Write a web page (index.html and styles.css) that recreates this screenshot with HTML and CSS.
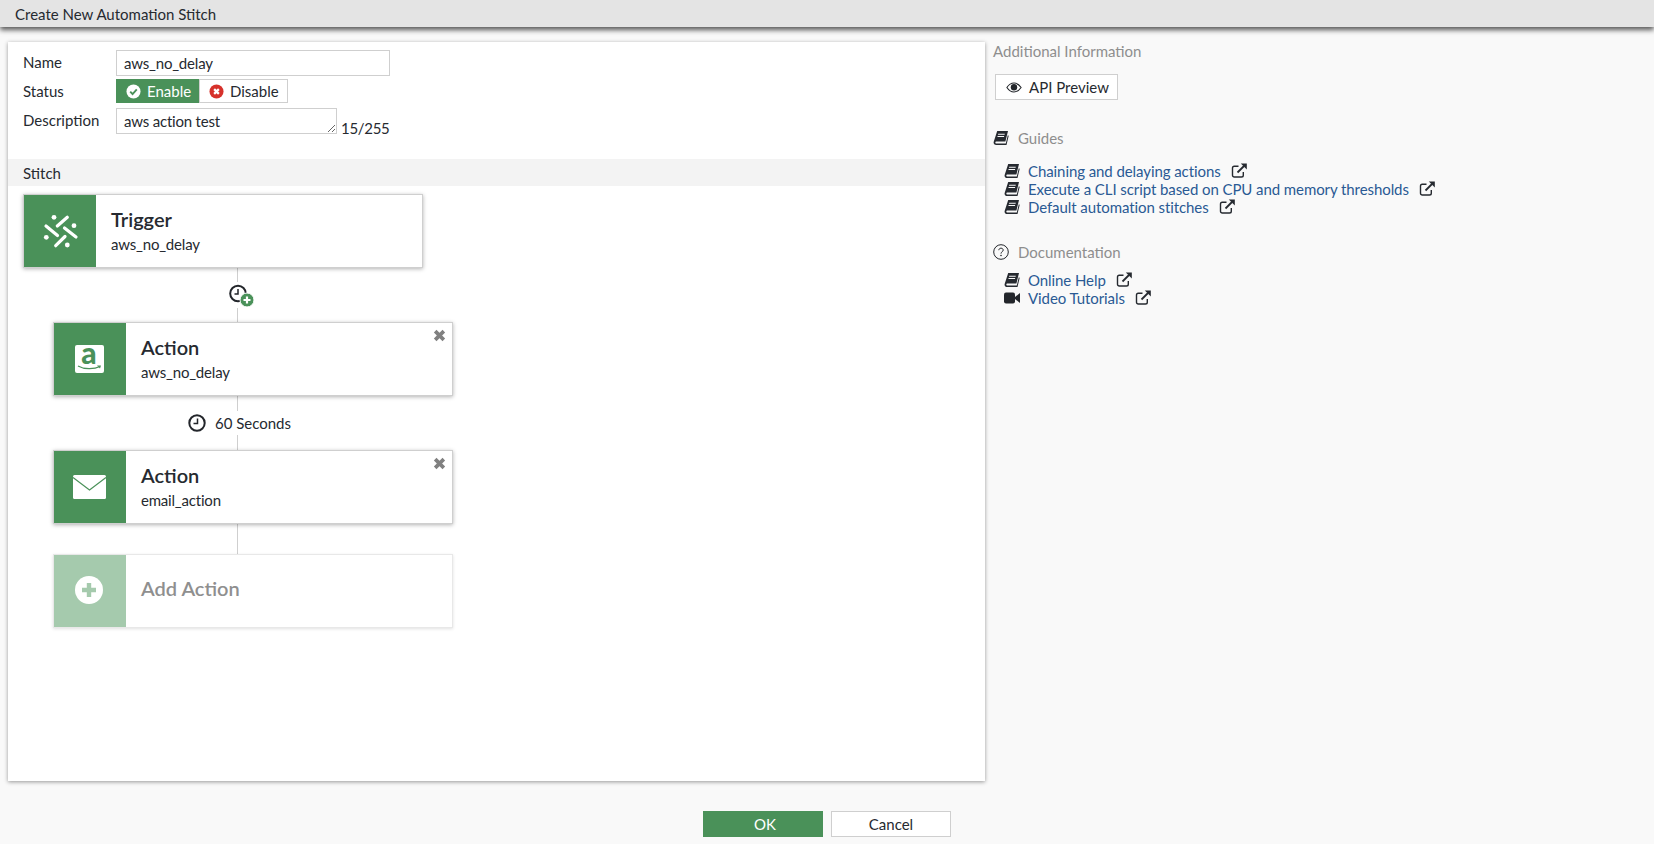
FILE: index.html
```html
<!DOCTYPE html>
<html lang="en">
<head>
    <meta charset="UTF-8">
    <title>Create New Automation Stitch</title>
    <link rel="stylesheet" href="styles.css">
</head>
<body>
    <svg class="defs" width="0" height="0">
        <symbol id="book" viewBox="0 0 16 16">
            <path fill="currentColor" d="M4.200 1H15l-2.600 10.600H3.600c-.9 0-1.300.5-1.300 1s.4 1 1.300 1h9.200l2-8.300.9.500-2.200 9.200H3.300C1.600 15 .4 13.900.6 12.300c0-.3.100-.6.200-.9z"/>
            <path fill="#f9f9f9" d="M5.200 3.800h6.600l-.2 1H5zM4.600 6h6.600l-.2 1H4.400z"/>
        </symbol>
        <symbol id="ext" viewBox="0 0 16 16">
            <path fill="none" stroke="currentColor" stroke-width="1.400" d="M12.300 9v3.200c0 1-.7 1.800-1.800 1.800H3.300c-1 0-1.800-.8-1.800-1.800V5c0-1 .8-1.800 1.800-1.800h4.200"/>
            <path fill="none" stroke="currentColor" stroke-width="1.800" d="M6.500 9.500 13 3"/>
            <path fill="currentColor" d="M9.800.6h6v6z"/>
        </symbol>
        <symbol id="close" viewBox="0 0 12 12">
            <path d="M2 2 10 10M10 2 2 10" fill="none" stroke="currentColor" stroke-width="3.400"/>
        </symbol>
    </svg>

    <header class="top-bar">Create New Automation Stitch</header>

    <main class="content">
        <section class="panel">
            <div class="form">
                <div class="row row-name">
                    <label class="row-label">Name</label>
                    <input class="text-input name-input" type="text" value="aws_no_delay">
                </div>
                <div class="row row-status">
                    <label class="row-label">Status</label>
                    <div class="toggle">
                        <span class="toggle-btn toggle-on">
                            <svg class="toggle-icon" viewBox="0 0 16 16">
                                <circle cx="8" cy="8" r="7.500" fill="#fff"/>
                                <path d="M4.500 8.200 7 10.700 11.500 5.800" fill="none" stroke="#4a9159" stroke-width="2"/>
                            </svg>
                            Enable
                        </span>
                        <span class="toggle-btn toggle-off">
                            <svg class="toggle-icon" viewBox="0 0 16 16">
                                <circle cx="8" cy="8" r="7.500" fill="#d6312b"/>
                                <path d="M5.500 5.500 10.500 10.500M10.500 5.500 5.500 10.500" fill="none" stroke="#fff" stroke-width="2.400"/>
                            </svg>
                            Disable
                        </span>
                    </div>
                </div>
                <div class="row row-desc">
                    <label class="row-label">Description</label>
                    <textarea class="text-input desc-input">aws action test</textarea>
                    <span class="counter">15/255</span>
                </div>
            </div>

            <div class="band">Stitch</div>

            <div class="stitch">
                <div class="card">
                    <div class="card-icon">
                        <svg class="trigger-icon" viewBox="0 0 40 40">
                            <g stroke="#fff" stroke-width="3.200" stroke-linecap="round" fill="none">
                                <path d="M16.300 15 26.300 6.300M5 15 16.500 24.500M23.500 17 35 26M14.700 34.700 24 25.500"/>
                            </g>
                            <g fill="#fff">
                                <circle cx="13" cy="6.300" r="2.400"/>
                                <circle cx="33" cy="14.700" r="2.400"/>
                                <circle cx="5.300" cy="26.300" r="2.400"/>
                                <circle cx="26.300" cy="34" r="2.400"/>
                            </g>
                        </svg>
                    </div>
                    <div class="card-text">
                        <div class="card-title">Trigger</div>
                        <div class="card-sub">aws_no_delay</div>
                    </div>
                </div>

                <div class="link">
                    <span class="link-line"></span>
                    <svg class="add-delay" viewBox="0 0 26 24">
                        <circle cx="10" cy="9.500" r="7.800" fill="#fff" stroke="#23262b" stroke-width="2"/>
                        <path d="M10 5v5H6.500" fill="none" stroke="#23262b" stroke-width="1.500"/>
                        <circle cx="19" cy="16" r="7" fill="#4a9159" stroke="#fff" stroke-width="1"/>
                        <path d="M19 12.500v7M15.500 16h7" stroke="#fff" stroke-width="2.200"/>
                    </svg>
                    <span class="link-line"></span>
                </div>

                <div class="card card-action">
                    <div class="card-icon">
                        <div class="aws-logo">
                            <span class="aws-letter">a</span>
                            <svg class="aws-smile" viewBox="0 0 25 6">
                                <path d="M1 1C7 4.500 17 4.500 23 1.500" fill="none" stroke="#4a9159" stroke-width="1.200"/>
                                <path d="M20 .5h4l-1 3z" fill="#4a9159"/>
                            </svg>
                        </div>
                    </div>
                    <div class="card-text">
                        <div class="card-title">Action</div>
                        <div class="card-sub">aws_no_delay</div>
                    </div>
                    <svg class="card-close"><use href="#close"/></svg>
                </div>

                <div class="link">
                    <span class="link-line"></span>
                    <div class="delay">
                        <svg class="delay-icon" viewBox="0 0 18 18">
                            <circle cx="9" cy="9" r="7.700" fill="none" stroke="#23262b" stroke-width="2"/>
                            <path d="M9.500 4.500V9.500H5.500" fill="none" stroke="#23262b" stroke-width="1.500"/>
                        </svg>
                        60 Seconds
                    </div>
                    <span class="link-line"></span>
                </div>

                <div class="card card-action">
                    <div class="card-icon">
                        <svg class="mail-icon" viewBox="0 0 33 24">
                            <rect width="33" height="24" rx="1.500" fill="#fff"/>
                            <path d="M0 2.500 16.500 15 33 2.500" fill="none" stroke="#4a9159" stroke-width="1.200"/>
                        </svg>
                    </div>
                    <div class="card-text">
                        <div class="card-title">Action</div>
                        <div class="card-sub">email_action</div>
                    </div>
                    <svg class="card-close"><use href="#close"/></svg>
                </div>

                <div class="link link-short">
                    <span class="link-line"></span>
                </div>

                <div class="card card-action card-add">
                    <div class="card-icon">
                        <svg class="plus-icon" viewBox="0 0 28 28">
                            <circle cx="14" cy="14" r="14" fill="#fff"/>
                            <path d="M14 7v14M7 14h14" stroke="#a5caad" stroke-width="4.400"/>
                        </svg>
                    </div>
                    <div class="card-text">
                        <div class="card-title">Add Action</div>
                    </div>
                </div>
            </div>
        </section>

        <aside class="side">
            <div class="side-title">Additional Information</div>
            <button class="preview-btn">
                <svg class="eye-icon" viewBox="0 0 18 12">
                    <path d="M1 6c2-3 5-5 8-5s6 2 8 5c-2 3-5 5-8 5S3 9 1 6z" fill="none" stroke="#23262b" stroke-width="1.200"/>
                    <circle cx="9" cy="5.800" r="3.600" fill="#23262b"/>
                </svg>
                API Preview
            </button>

            <div class="side-head head-guides">
                <svg class="side-icon"><use href="#book"/></svg>
                Guides
            </div>
            <ul class="links">
                <li>
                    <svg class="side-icon"><use href="#book"/></svg>
                    <a class="doc-link">Chaining and delaying actions</a>
                    <svg class="ext-icon"><use href="#ext"/></svg>
                </li>
                <li>
                    <svg class="side-icon"><use href="#book"/></svg>
                    <a class="doc-link">Execute a CLI script based on CPU and memory thresholds</a>
                    <svg class="ext-icon"><use href="#ext"/></svg>
                </li>
                <li>
                    <svg class="side-icon"><use href="#book"/></svg>
                    <a class="doc-link">Default automation stitches</a>
                    <svg class="ext-icon"><use href="#ext"/></svg>
                </li>
            </ul>

            <div class="side-head head-docs">
                <svg class="side-icon" viewBox="0 0 16 16">
                    <circle cx="8" cy="8" r="7.300" fill="none" stroke="#23262b" stroke-width="1"/>
                    <path d="M5.800 6.200C5.900 4.900 6.800 4.200 8 4.200c1.300 0 2.200.8 2.200 1.900 0 1.700-2.200 1.600-2.200 3.500" fill="none" stroke="#23262b" stroke-width="1"/>
                    <circle cx="8" cy="11.500" r=".8" fill="#23262b"/>
                </svg>
                Documentation
            </div>
            <ul class="links links-docs">
                <li>
                    <svg class="side-icon"><use href="#book"/></svg>
                    <a class="doc-link">Online Help</a>
                    <svg class="ext-icon"><use href="#ext"/></svg>
                </li>
                <li>
                    <svg class="side-icon" viewBox="0 0 16 16">
                        <rect y="2.500" width="11" height="11" rx="2" fill="#23262b"/>
                        <path d="M11 7 16 3v10l-5-4z" fill="#23262b"/>
                    </svg>
                    <a class="doc-link">Video Tutorials</a>
                    <svg class="ext-icon"><use href="#ext"/></svg>
                </li>
            </ul>
        </aside>
    </main>

    <footer class="actions">
        <button class="btn btn-ok">OK</button>
        <button class="btn btn-cancel">Cancel</button>
    </footer>
</body>
</html>
```

FILE: styles.css
```css
:root {
    --green: #4a9159;
    --green-light: #a5caad;
    --text: #262a30;
    --muted: #8e8e8e;
    --link: #2a5a94;
    --border: #cfcfcf;
    --page: #f9f9f9;
}

* {
    margin: 0;
    padding: 0;
    box-sizing: border-box;
}

body {
    font-family: Lato, "Liberation Sans", sans-serif;
    font-size: 15px;
    background: var(--page);
    color: var(--text);
    height: 844px;
    overflow: hidden;
}

.defs {
    display: block;
    height: 0;
}

.top-bar {
    height: 27px;
    line-height: 29px;
    padding-left: 15px;
    background: #e4e4e4;
    box-shadow: 0 3px 5px rgba(0, 0, 0, 0.65);
    position: relative;
}

.content {
    display: flex;
    padding: 15px 0 0 8px;
}

.panel {
    width: 977px;
    height: 739px;
    background: #fff;
    box-shadow: 0 1px 4px rgba(0, 0, 0, 0.4);
}

.form {
    padding: 8px 0 0 15px;
}

.row {
    display: flex;
}

.row-label {
    width: 93px;
}

.row-name {
    height: 26px;
    margin-bottom: 3px;
}

.row-name .row-label {
    line-height: 24px;
}

.row-status {
    height: 24px;
    margin-bottom: 5px;
    line-height: 25px;
}

.row-desc {
    height: 26px;
}

.row-desc .row-label {
    line-height: 24px;
}

.text-input {
    font-family: inherit;
    font-size: 15px;
    letter-spacing: -0.2px;
    color: var(--text);
    border: 1px solid var(--border);
    padding: 0 7px;
    background: #fff;
    outline: none;
}

.name-input {
    width: 274px;
    height: 26px;
}

.desc-input {
    width: 221px;
    height: 26px;
    line-height: 24px;
    resize: both;
    display: block;
}

.counter {
    margin: 7px 0 0 4px;
    line-height: 26px;
    letter-spacing: -0.3px;
}

.toggle {
    display: flex;
}

.toggle-btn {
    display: flex;
    align-items: center;
    height: 24px;
    gap: 6px;
    padding-left: 10px;
}

.toggle-on {
    width: 83px;
    background: var(--green);
    color: #fff;
}

.toggle-off {
    width: 89px;
    border: 1px solid var(--border);
    padding-left: 9px;
}

.toggle-icon {
    width: 15px;
    height: 15px;
}

.band {
    margin-top: 25px;
    height: 27px;
    line-height: 28px;
    padding-left: 15px;
    background: #f3f3f3;
}

.stitch {
    padding: 8px 0 0 15px;
}

.card {
    display: flex;
    width: 400px;
    height: 74px;
    border: 1px solid #cfcfcf;
    background: #fff;
    box-shadow: 0 1px 4px rgba(0, 0, 0, 0.3);
    position: relative;
}

.card-action {
    margin-left: 30px;
}

.card-icon {
    width: 72px;
    flex: none;
    background: var(--green);
    display: flex;
    align-items: center;
    justify-content: center;
}

.card-action .card-icon {
    padding-right: 2px;
}

.card-text {
    padding: 0 0 4px 15px;
    display: flex;
    flex-direction: column;
    justify-content: center;
}

.card-title {
    font-size: 20px;
    font-weight: 600;
    line-height: 28px;
    margin-bottom: 2px;
}

.card-sub {
    line-height: 18px;
    letter-spacing: -0.2px;
}

.card-close {
    position: absolute;
    top: 6px;
    right: 6px;
    width: 13px;
    height: 13px;
    color: #808080;
}

.card-add {
    border-color: #e8e8e8;
    box-shadow: 0 1px 3px rgba(0, 0, 0, 0.12);
}

.card-add .card-icon {
    background: var(--green-light);
    padding-bottom: 2px;
}

.card-add .card-text {
    padding-bottom: 6px;
}

.card-add .card-title {
    color: #8f8f8f;
    margin-bottom: 0;
}

.link {
    width: 429px;
    height: 54px;
    display: flex;
    flex-direction: column;
    align-items: center;
}

.link-short {
    height: 30px;
}

.link-line {
    width: 1px;
    flex: 1;
    background: #cfcfcf;
}

.add-delay {
    width: 26px;
    height: 24px;
    margin: 2px 0 0 7px;
}

.delay {
    display: flex;
    align-items: center;
    gap: 9px;
    height: 24px;
    margin-left: 4px;
    padding: 0 1px;
    background: #fff;
}

.delay-icon {
    width: 18px;
    height: 18px;
}

.trigger-icon {
    width: 40px;
    height: 40px;
    margin-left: 1px;
}

.aws-logo {
    width: 29px;
    height: 28px;
    background: #fff;
    border-radius: 2px;
    display: flex;
    flex-direction: column;
    align-items: center;
}

.aws-letter {
    font-weight: 900;
    font-size: 30px;
    line-height: 14px;
    margin-bottom: 6px;
    color: var(--green);
}

.aws-smile {
    width: 25px;
    height: 6px;
}

.mail-icon {
    width: 33px;
    height: 24px;
}

.plus-icon {
    width: 28px;
    height: 28px;
}

.side {
    padding: 0 0 0 8px;
    line-height: 18px;
}

.side-title {
    color: var(--muted);
}

.preview-btn {
    display: flex;
    align-items: center;
    gap: 7px;
    margin: 14px 0 0 2px;
    width: 123px;
    height: 26px;
    padding-left: 10px;
    font-family: inherit;
    font-size: 15px;
    color: var(--text);
    background: #fff;
    border: 1px solid var(--border);
}

.eye-icon {
    width: 16px;
    height: 11px;
}

.side-icon {
    width: 16px;
    height: 16px;
    flex: none;
    color: var(--text);
}

.side-head {
    display: flex;
    align-items: center;
    gap: 9px;
    color: var(--muted);
}

.head-guides {
    margin-top: 29px;
}

.head-docs {
    margin-top: 27px;
}

.links {
    list-style: none;
    margin: 15px 0 0 11px;
}

.links-docs {
    margin-top: 10px;
}

.links li {
    display: flex;
    align-items: center;
    height: 18px;
    gap: 8px;
}

.doc-link {
    color: var(--link);
    letter-spacing: -0.08px;
}

.ext-icon {
    width: 16px;
    height: 16px;
    margin-left: 2px;
    color: var(--text);
}

.actions {
    display: flex;
    justify-content: center;
    gap: 8px;
    padding-top: 30px;
}

.btn {
    width: 120px;
    height: 26px;
    font-family: inherit;
    font-size: 15px;
}

.btn-ok {
    background: var(--green);
    border: none;
    color: #fff;
    padding-left: 4px;
}

.btn-cancel {
    background: #fff;
    border: 1px solid var(--border);
    color: var(--text);
}
```
